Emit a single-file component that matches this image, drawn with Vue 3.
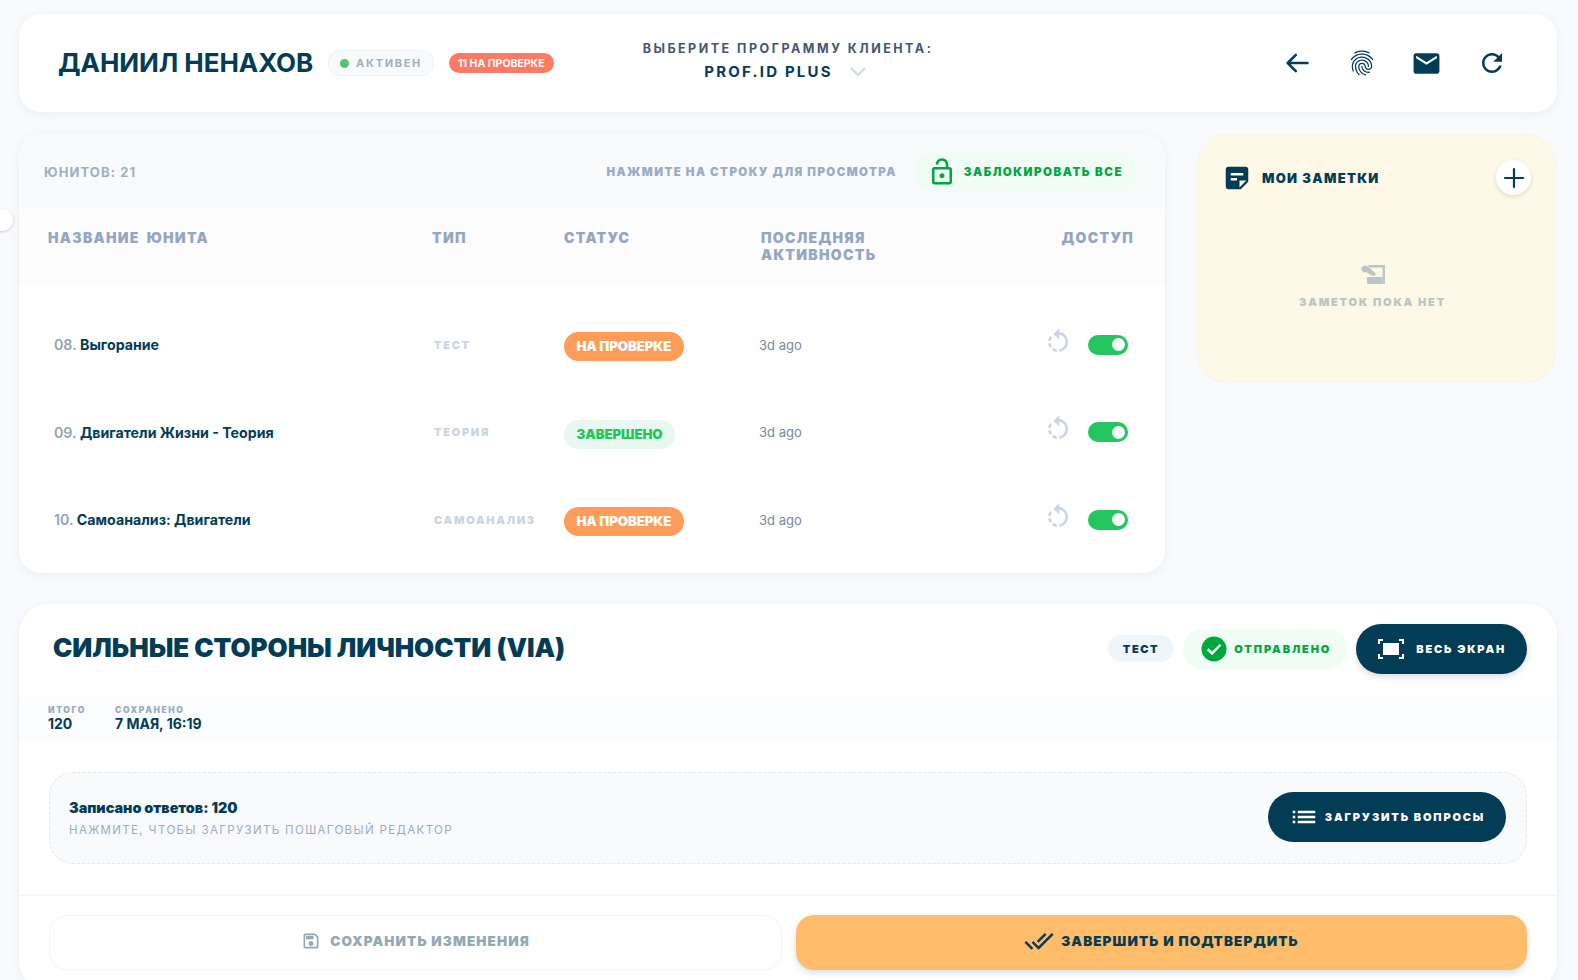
<script setup>
const units = [
  { num: '08.', name: 'Выгорание', type: 'Тест', status: 'На проверке', done: false },
  { num: '09.', name: 'Двигатели Жизни - Теория', type: 'Теория', status: 'Завершено', done: true },
  { num: '10.', name: 'Самоанализ: Двигатели', type: 'Самоанализ', status: 'На проверке', done: false },
]
</script>

<template>
  <div class="page">
    <span class="side-toggle"></span>

    <header class="card top">
      <div class="client">
        <h1>Даниил Ненахов</h1>
        <span class="active"><i></i>Активен</span>
        <span class="pending">11 на проверке</span>
      </div>
      <div class="program">
        <div class="program-label">Выберите программу клиента:</div>
        <div class="program-value">
          PROF.ID PLUS
          <svg width="18" height="12" viewBox="0 0 18 12" fill="none" stroke="#cfdade" stroke-width="2"><path d="M2 2l7 7 7-7" /></svg>
        </div>
      </div>
      <div class="top-actions">
        <button type="button">
          <svg width="28" height="28" viewBox="0 0 24 24" fill="none" stroke="#033c55" stroke-width="2.2" stroke-linecap="round" stroke-linejoin="round"><path d="M21 12H4M11 5l-7 7 7 7" /></svg>
        </button>
        <button type="button">
          <svg width="30" height="30" viewBox="0 0 24 24" fill="#033c55"><path d="M17.81 4.47c-.08 0-.16-.02-.23-.06C15.66 3.42 14 3 12.01 3c-1.98 0-3.86.47-5.57 1.41-.24.13-.54.04-.68-.2-.13-.24-.04-.55.2-.68C7.82 2.52 9.86 2 12.01 2c2.13 0 3.99.47 6.03 1.52.25.13.34.43.21.67-.09.18-.26.28-.44.28zM3.5 9.72c-.1 0-.2-.03-.29-.09-.23-.16-.28-.47-.12-.7.99-1.4 2.25-2.5 3.75-3.27C9.98 4.04 14 4.03 17.15 5.65c1.5.77 2.76 1.86 3.75 3.25.16.22.11.54-.12.7-.23.16-.54.11-.7-.12-.9-1.26-2.04-2.25-3.39-2.94-2.87-1.47-6.54-1.47-9.4.01-1.36.7-2.5 1.7-3.4 2.96-.08.14-.23.21-.39.21zm6.25 12.07c-.13 0-.26-.05-.35-.15-.87-.87-1.34-1.43-2.01-2.64-.69-1.23-1.05-2.73-1.05-4.34 0-2.97 2.54-5.39 5.66-5.39s5.66 2.42 5.66 5.39c0 .28-.22.5-.5.5s-.5-.22-.5-.5c0-2.42-2.09-4.39-4.66-4.39-2.57 0-4.66 1.97-4.66 4.39 0 1.44.32 2.77.93 3.85.64 1.15 1.08 1.64 1.85 2.42.19.2.19.51 0 .71-.11.1-.24.15-.37.15zm7.17-1.85c-1.19 0-2.24-.3-3.1-.89-1.49-1.01-2.38-2.65-2.38-4.39 0-.28.22-.5.5-.5s.5.22.5.5c0 1.41.72 2.74 1.94 3.56.71.48 1.54.71 2.54.71.24 0 .64-.03 1.04-.1.27-.05.53.13.58.41.05.27-.13.53-.41.58-.57.11-1.07.12-1.21.12zM14.91 22c-.04 0-.09-.01-.13-.02-1.59-.44-2.63-1.03-3.72-2.1-1.4-1.39-2.17-3.24-2.17-5.22 0-1.62 1.38-2.94 3.08-2.94 1.7 0 3.08 1.32 3.08 2.94 0 1.07.93 1.94 2.08 1.94s2.08-.87 2.08-1.94c0-3.77-3.25-6.83-7.25-6.83-2.84 0-5.44 1.58-6.61 4.03-.39.81-.59 1.76-.59 2.8 0 .78.07 2.01.67 3.61.1.26-.03.55-.29.64-.26.1-.55-.04-.64-.29-.49-1.31-.73-2.61-.73-3.96 0-1.2.23-2.29.68-3.24 1.33-2.79 4.28-4.6 7.51-4.6 4.55 0 8.25 3.51 8.25 7.83 0 1.62-1.38 2.94-3.08 2.94s-3.08-1.32-3.08-2.94c0-1.07-.93-1.94-2.08-1.94s-2.08.87-2.08 1.94c0 1.71.66 3.31 1.87 4.51.95.94 1.86 1.46 3.27 1.85.27.07.42.35.35.61-.05.23-.26.38-.47.38z" /></svg>
        </button>
        <button type="button">
          <svg width="31" height="31" viewBox="0 0 24 24" fill="#033c55"><path d="M20 4H4c-1.1 0-1.99.9-1.99 2L2 18c0 1.1.9 2 2 2h16c1.1 0 2-.9 2-2V6c0-1.1-.9-2-2-2zm0 4l-8 5-8-5V6l8 5 8-5v2z" /></svg>
        </button>
        <button type="button">
          <svg width="30" height="30" viewBox="0 0 24 24" fill="#033c55"><path d="M17.65 6.35C16.2 4.9 14.21 4 12 4c-4.42 0-7.99 3.58-7.99 8s3.57 8 7.99 8c3.73 0 6.84-2.55 7.73-6h-2.08c-.82 2.33-3.04 4-5.65 4-3.31 0-6-2.69-6-6s2.69-6 6-6c1.66 0 3.14.69 4.22 1.78L13 11h7V4l-2.35 2.35z" /></svg>
        </button>
      </div>
    </header>

    <div class="middle">
      <section class="card units">
        <div class="toolbar">
          <span class="count">Юнитов: 21</span>
          <span class="hint">Нажмите на строку для просмотра</span>
          <button type="button" class="lock-all">
            <svg width="30" height="30" viewBox="0 0 24 24" fill="#00a63e"><path d="M12 17c1.1 0 2-.9 2-2s-.9-2-2-2-2 .9-2 2 .9 2 2 2zm6-9h-1V6c0-2.76-2.24-5-5-5S7 3.24 7 6h2c0-1.66 1.34-3 3-3s3 1.34 3 3v2H6c-1.1 0-2 .9-2 2v10c0 1.1.9 2 2 2h12c1.1 0 2-.9 2-2V10c0-1.1-.9-2-2-2zm0 12H6V10h12v10z" /></svg>
            Заблокировать все
          </button>
        </div>
        <div class="thead cols">
          <span>Название юнита</span>
          <span>Тип</span>
          <span>Статус</span>
          <span>Последняя<br />активность</span>
          <span class="right">Доступ</span>
        </div>
        <div class="tbody">
          <div v-for="u in units" :key="u.num" class="row cols">
            <div class="unit-name"><span>{{ u.num }}</span> {{ u.name }}</div>
            <div class="unit-type">{{ u.type }}</div>
            <div><span class="status" :class="{ done: u.done }">{{ u.status }}</span></div>
            <div class="when">3d ago</div>
            <div class="access">
              <svg width="30" height="30" viewBox="0 0 24 24" fill="#cbd5e1"><path d="M7.11 8.53L5.7 7.11C4.8 8.27 4.24 9.61 4.07 11h2.02c.14-.87.49-1.72 1.02-2.47zM6.09 13H4.07c.17 1.39.72 2.73 1.62 3.89l1.41-1.42c-.52-.75-.87-1.59-1.01-2.47zm1.01 5.32c1.16.9 2.51 1.44 3.9 1.61V17.9c-.87-.15-1.71-.49-2.46-1.03L7.1 18.32zM13 4.07V1L8.45 5.55 13 10V6.09c2.84.48 5 2.94 5 5.91s-2.16 5.43-5 5.91v2.02c3.95-.49 7-3.85 7-7.93s-3.05-7.44-7-7.93z" /></svg>
              <span class="toggle"><i></i></span>
            </div>
          </div>
        </div>
      </section>

      <aside class="notes">
        <div class="notes-head">
          <svg width="30" height="30" viewBox="0 0 24 24" fill="#033c55"><path d="M19 3H4.99C3.89 3 3 3.9 3 5l.01 14c0 1.1.89 2 1.99 2h10l6-6V5c0-1.1-.9-2-2-2zM7 8h10v2H7V8zm5 6H7v-2h5v2zm2 5.5V14h5.5L14 19.5z" /></svg>
          <span>Мои заметки</span>
          <button type="button" class="add-note">
            <svg width="22" height="22" viewBox="0 0 22 22" fill="none" stroke="#033c55" stroke-width="2.2" stroke-linecap="round"><path d="M11 2v18M2 11h18" /></svg>
          </button>
        </div>
        <div class="notes-empty">
          <svg width="28" height="24" viewBox="0 0 28 24" fill="#b9c6c3"><path d="M9 2h17v19h-2.4V4.4H11z" /><path d="M8 14h15.6v7H9.5C8.7 21 8 20.3 8 19.5z" /><path d="M2 5l3.5-2.5 4 1 7.5 7.5-1.2 1.8-2.8-.3-6-3.5-3 .5z" /></svg>
          <span>Заметок пока нет</span>
        </div>
      </aside>
    </div>

    <section class="card detail">
      <div class="detail-head">
        <h2>Сильные стороны личности (VIA)</h2>
        <span class="tag">Тест</span>
        <span class="sent">
          <svg width="30" height="30" viewBox="0 0 24 24"><circle cx="12" cy="12" r="10" fill="#00a63e" /><path d="M7 12.2l3.4 3.4L17.2 8.6" fill="none" stroke="#fff" stroke-width="2" /></svg>
          Отправлено
        </span>
        <button type="button" class="dark-btn full">
          <svg width="28" height="24" viewBox="0 0 28 24" fill="none" stroke="#fff" stroke-width="2"><path d="M2 7V3h4M22 3h4v4M26 17v4h-4M6 21H2v-4" /><rect x="6" y="6" width="16" height="12" fill="#fff" stroke="none" /></svg>
          Весь экран
        </button>
      </div>

      <div class="stats">
        <div><small>Итого</small><b>120</b></div>
        <div><small>Сохранено</small><b>7 мая, 16:19</b></div>
      </div>

      <div class="editor-wrap">
        <div class="editor-box">
          <div class="editor-text">
            <div class="answers">Записано ответов: 120</div>
            <div class="answers-hint">Нажмите, чтобы загрузить пошаговый редактор</div>
          </div>
          <button type="button" class="dark-btn load">
            <svg width="30" height="30" viewBox="0 0 24 24" fill="#fff"><path d="M3 13h2v-2H3v2zm0 4h2v-2H3v2zm0-8h2V7H3v2zm4 4h14v-2H7v2zm0 4h14v-2H7v2zM7 7v2h14V7H7z" /></svg>
            Загрузить вопросы
          </button>
        </div>
      </div>

      <div class="footer">
        <button type="button" class="save">
          <svg width="20" height="20" viewBox="0 0 24 24" fill="#94a8b2"><path d="M17 3H5c-1.11 0-2 .9-2 2v14c0 1.1.89 2 2 2h14c1.1 0 2-.9 2-2V7l-4-4zm2 16H5V5h11.17L19 7.83V19zm-7-7c-1.66 0-3 1.34-3 3s1.34 3 3 3 3-1.34 3-3-1.34-3-3-3zM6 6h9v4H6z" /></svg>
          Сохранить изменения
        </button>
        <button type="button" class="finish">
          <svg width="30" height="30" viewBox="0 0 24 24" fill="#033c55"><path d="M18 7l-1.41-1.41-6.34 6.34 1.41 1.41L18 7zm4.24-1.41L11.66 16.17 7.48 12l-1.41 1.41L11.66 19l12-12-1.42-1.41zM.41 13.41L6 19l1.41-1.41L1.83 12 .41 13.41z" /></svg>
          Завершить и подтвердить
        </button>
      </div>
    </section>
  </div>
</template>

<style scoped>
.page {
  position: relative;
  padding: 14px 21px 0 19px;
  font-family: Inter, "Noto Sans", sans-serif;
  color: #033c55;
}

button {
  font-family: inherit;
  border: 0;
  cursor: pointer;
}

.side-toggle {
  position: absolute;
  left: -9px;
  top: 209px;
  width: 22px;
  height: 22px;
  border-radius: 50%;
  background: #fff;
  box-shadow: 0 1px 3px rgba(15, 23, 42, 0.2);
}

.card {
  background: #fff;
  box-shadow: 0 2px 8px rgba(148, 163, 184, 0.12);
}

.top {
  display: grid;
  grid-template-columns: 1fr auto 1fr;
  align-items: center;
  height: 98px;
  padding: 0 43px 0 39px;
  border-radius: 22px;
}

.client {
  display: flex;
  align-items: center;
}

h1 {
  margin: 0 15px 0 0;
  font-size: 26px;
  font-weight: 700;
  line-height: 1;
  letter-spacing: -0.05px;
  text-transform: uppercase;
  white-space: nowrap;
}

.active {
  display: flex;
  align-items: center;
  gap: 7px;
  height: 24px;
  padding: 0 11px;
  margin-right: 15px;
  border: 1px solid #eef2f6;
  border-radius: 12px;
  background: #f8fafc;
  font-size: 11px;
  font-weight: 700;
  letter-spacing: 1.7px;
  color: #9fb0bd;
  text-transform: uppercase;
}

.active i {
  width: 9px;
  height: 9px;
  border-radius: 50%;
  background: #5fbf78;
}

.pending {
  display: flex;
  align-items: center;
  height: 20px;
  padding: 0 9px;
  border-radius: 10px;
  background: #ff7a65;
  color: #fff;
  font-size: 10.5px;
  font-weight: 700;
  text-transform: uppercase;
  white-space: nowrap;
}

.program {
  text-align: center;
  transform: translate(2px, -2px);
}

.program-label {
  font-size: 12.5px;
  font-weight: 700;
  letter-spacing: 2.5px;
  color: #45566f;
  text-transform: uppercase;
}

.program-value {
  display: flex;
  align-items: center;
  justify-content: center;
  gap: 16px;
  margin: 6px 0 0 -5px;
  font-size: 15px;
  font-weight: 700;
  letter-spacing: 2.2px;
}

.top-actions {
  display: flex;
  justify-content: flex-end;
  gap: 20px;
}

.top-actions button {
  display: flex;
  align-items: center;
  justify-content: center;
  width: 45px;
  height: 45px;
  padding: 0;
  background: none;
}

.middle {
  display: grid;
  grid-template-columns: 1146px 359px;
  gap: 32px;
  margin-top: 22px;
}

.units {
  height: 439px;
  overflow: hidden;
  border-radius: 22px;
}

.toolbar {
  display: flex;
  align-items: center;
  height: 75px;
  padding: 0 27px 0 25px;
  background: #f8fafc;
}

.count {
  margin-right: auto;
  font-size: 13px;
  font-weight: 700;
  letter-spacing: 1.1px;
  color: #9fb0bd;
  text-transform: uppercase;
}

.hint {
  font-size: 11.5px;
  font-weight: 900;
  letter-spacing: 1.4px;
  color: #9cabc2;
  text-transform: uppercase;
}

.lock-all {
  display: flex;
  align-items: center;
  gap: 7px;
  height: 40px;
  margin-left: 17px;
  padding: 0 15px 0 13px;
  border-radius: 20px;
  background: #f0fdf4;
  color: #00a63e;
  font-size: 11.5px;
  font-weight: 900;
  letter-spacing: 1.55px;
  text-transform: uppercase;
}

.cols {
  display: grid;
  grid-template-columns: 384px 132px 197px 1fr 120px;
  padding: 0 31px 0 29px;
}

.thead {
  height: 76px;
  padding-top: 20px;
  box-sizing: border-box;
  background: #fcfcfd;
  font-size: 14px;
  font-weight: 900;
  line-height: 17px;
  letter-spacing: 1.3px;
  word-spacing: 3px;
  color: #96a6c0;
  text-transform: uppercase;
}

.right {
  text-align: right;
}

.tbody {
  padding-top: 16px;
}

.row {
  align-items: center;
  height: 87.5px;
  padding-left: 35px;
  padding-right: 37px;
  grid-template-columns: 380px 130px 195px 1fr 120px;
}

.unit-name {
  font-size: 14.2px;
  font-weight: 700;
  white-space: nowrap;
}

.unit-name span {
  color: #94a3b8;
  font-weight: 600;
}

.unit-type {
  font-size: 11px;
  font-weight: 900;
  letter-spacing: 1.7px;
  color: #cbd5e1;
  text-transform: uppercase;
}

.status {
  display: inline-flex;
  align-items: center;
  height: 29px;
  box-sizing: border-box;
  padding: 0 12.5px 1px;
  border-radius: 15px;
  background: #ff9c59;
  color: #fff;
  font-size: 13.2px;
  font-weight: 900;
  letter-spacing: -0.05px;
  text-transform: uppercase;
  position: relative;
  top: 2px;
}

.status.done {
  background: #e8f7ef;
  color: #22c55e;
}

.when {
  font-size: 13px;
  color: #7b8a9c;
}

.access {
  display: flex;
  align-items: center;
  justify-content: flex-end;
  gap: 15px;
}

.access svg {
  position: relative;
  top: -3px;
}

.toggle {
  display: flex;
  align-items: center;
  justify-content: flex-end;
  width: 40px;
  height: 20px;
  padding: 0 3px;
  box-sizing: border-box;
  border-radius: 10px;
  background: #22c55e;
}

.toggle i {
  width: 13px;
  height: 13px;
  border-radius: 50%;
  background: #fff;
}

.notes {
  height: 249px;
  box-sizing: border-box;
  padding: 0 24px 0 24px;
  border: 1px solid #f3f5f6;
  border-radius: 30px;
  background: #fef8e6;
}

.notes-head {
  display: flex;
  align-items: center;
  gap: 10px;
  margin-top: 25px;
  font-size: 13px;
  font-weight: 900;
  letter-spacing: 1.3px;
  text-transform: uppercase;
}

.add-note {
  display: flex;
  align-items: center;
  justify-content: center;
  width: 35px;
  height: 35px;
  margin-left: auto;
  padding: 0;
  border-radius: 50%;
  background: #fff;
  box-shadow: 0 2px 5px rgba(15, 23, 42, 0.12);
}

.notes-empty {
  display: flex;
  flex-direction: column;
  align-items: center;
  gap: 8px;
  margin-top: 68px;
  padding-right: 8px;
  font-size: 11px;
  font-weight: 900;
  letter-spacing: 1.8px;
  color: #b9c6c3;
  text-transform: uppercase;
}

.detail {
  margin-top: 31px;
  border-radius: 30px;
}

.detail-head {
  display: flex;
  align-items: center;
  height: 91px;
  box-sizing: border-box;
  padding: 0 30px 2px 34px;
}

h2 {
  margin: 0 auto 0 0;
  font-size: 26px;
  font-weight: 900;
  letter-spacing: -0.07px;
  text-transform: uppercase;
  transform: translateY(-1px);
}

.tag {
  display: flex;
  align-items: center;
  height: 27px;
  padding: 0 15px;
  border-radius: 14px;
  background: #eff6f9;
  font-size: 11px;
  font-weight: 900;
  letter-spacing: 1.6px;
  text-transform: uppercase;
}

.sent {
  display: flex;
  align-items: center;
  gap: 5px;
  height: 40px;
  margin: 0 9px;
  padding: 0 16px;
  border-radius: 20px;
  background: #f0fdf4;
  color: #00a63e;
  font-size: 11px;
  font-weight: 900;
  letter-spacing: 1.9px;
  text-transform: uppercase;
}

.dark-btn {
  display: flex;
  align-items: center;
  height: 50px;
  border-radius: 25px;
  background: #033c55;
  color: #fff;
  font-size: 11px;
  font-weight: 900;
  letter-spacing: 1.8px;
  text-transform: uppercase;
}

.full {
  gap: 11px;
  padding: 0 21px;
  box-shadow: 0 3px 6px rgba(15, 23, 42, 0.14);
}

.stats {
  display: flex;
  gap: 29px;
  height: 46px;
  padding: 10px 29px 0;
  box-sizing: border-box;
  background: #fbfcfd;
}

.stats small {
  display: block;
  font-size: 8.5px;
  font-weight: 900;
  letter-spacing: 1.6px;
  color: #9cabc2;
  line-height: 11px;
  text-transform: uppercase;
}

.stats b {
  display: block;
  font-size: 14px;
  font-weight: 700;
  line-height: 16px;
  text-transform: uppercase;
}

.editor-wrap {
  padding: 31px 30px 30px;
  border-bottom: 2px solid #f4f6fa;
}

.editor-box {
  display: flex;
  align-items: center;
  justify-content: space-between;
  height: 92px;
  box-sizing: border-box;
  padding: 0 20px 2px 19px;
  border: 1px dashed #e2e8f0;
  border-radius: 24px;
  background: #f8fafc;
}

.editor-text {
  margin-top: 2px;
}

.answers {
  font-size: 14.4px;
  font-weight: 900;
}

.answers-hint {
  margin-top: 7px;
  font-size: 11.5px;
  letter-spacing: 1.35px;
  color: #9cabc2;
  text-transform: uppercase;
}

.load {
  gap: 6px;
  padding: 0 21px;
}

.footer {
  display: grid;
  grid-template-columns: 733px 731px;
  gap: 14px;
  padding: 19px 30px 20px;
}

.footer button {
  display: flex;
  align-items: center;
  justify-content: center;
  height: 55px;
  padding-bottom: 4px;
  font-size: 13.5px;
  font-weight: 900;
  letter-spacing: 1.1px;
  text-transform: uppercase;
}

.save {
  gap: 9px;
  border: 1px solid #f1f5f9;
  border-radius: 18px;
  background: #fff;
  color: #94a8b2;
}

.finish {
  gap: 7px;
  border-radius: 18px;
  background: #ffbc6b;
  color: #033c55;
  box-shadow: 0 3px 6px rgba(148, 163, 184, 0.35);
}
</style>

<style>
html, body {
  background: #f8fafc;
}
</style>
